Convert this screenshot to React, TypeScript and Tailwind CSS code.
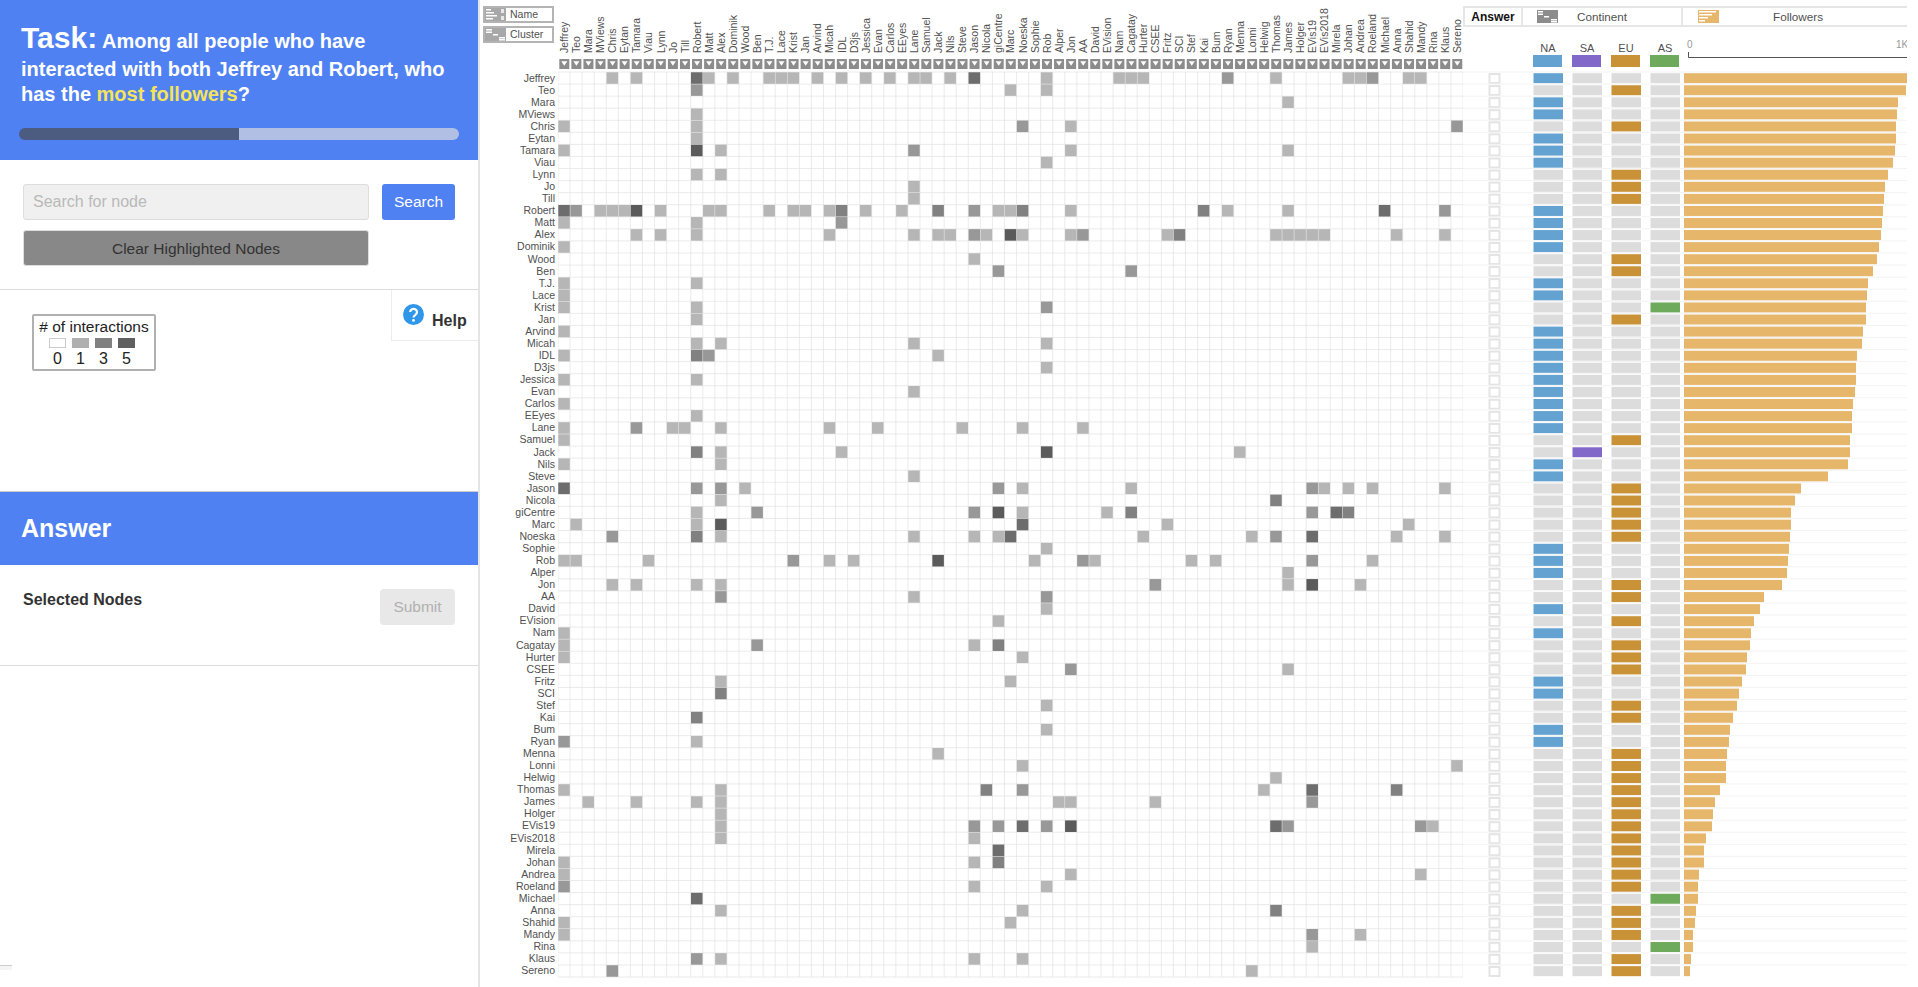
const names = "Jeffrey,Teo,Mara,MViews,Chris,Eytan,Tamara,Viau,Lynn,Jo,Till,Robert,Matt,Alex,Dominik,Wood,Ben,T.J.,Lace,Krist,Jan,Arvind,Micah,IDL,D3js,Jessica,Evan,Carlos,EEyes,Lane,Samuel,Jack,Nils,Steve,Jason,Nicola,giCentre,Marc,Noeska,Sophie,Rob,Alper,Jon,AA,David,EVision,Nam,Cagatay,Hurter,CSEE,Fritz,SCI,Stef,Kai,Bum,Ryan,Menna,Lonni,Helwig,Thomas,James,Holger,EVis19,EVis2018,Mirela,Johan,Andrea,Roeland,Michael,Anna,Shahid,Mandy,Rina,Klaus,Sereno".split(",")

// upper triangle of the matrix, "col" or "col:level" per row, mirrored below
const edges: Record<number, string> = {
    0: "4,6,11:4,12,14,17,18,19,21,23,25,27,29,30,32,34:4,40,46,47,48,55:2,59,65,66,67:2,70,71",
    1: "11:2,37,40",
    2: "60",
    3: "11",
    4: "11,38:2,42,74:2",
    5: "11",
    6: "11:5,13,29:2,42,60",
    7: "40",
    8: "11,13",
    9: "29",
    10: "29",
    11: "12,13,17,19,20,22,23:3,25,28,31:3,34:2,36,37,38:3,42,53:3,55,60,68:4,73:2",
    12: "23:2",
    13: "22,29,31,32,34:2,35,37:5,38,42,43:2,50,51:3,59,60,61,62,63,69,73",
    15: "34",
    16: "36:2,47:2",
    19: "40:2",
    22: "29,40",
    23: "31",
    24: "40",
    26: "29",
    29: "33,38,43",
    31: "40:5,56",
    34: "36:2,38,47,62:2,63,65,67,73",
    35: "59:3",
    36: "36:5,38,45,47:3,62:2,64:4,65:3",
    37: "38:4,50,70",
    38: "48,57,59:2,62:4,69,73",
    39: "40",
    40: "43:2,44,52,54,62:2,67",
    41: "60",
    42: "49:2,60,62:5,66",
    49: "60",
    57: "74",
    58: "59",
    59: "62:4,69:3",
    60: "62:2",
    62: "71:2,72",
    66: "71",
}

const continents = "NENNENNNEEENNNNEENNAE" + "NNNNNNNNN" + "ESNN" + "EEEEE" + "NNN" + "EENENEEENNEENN" + "EEEEEEEEEEEE" + "AEEEAEE"

// bar right edges, px from the start of the followers column
const followers = [224, 222, 214, 213, 212, 212, 211, 209, 204, 201, 200, 199, 198, 197, 195, 193, 189, 184, 183, 182, 182, 179, 178, 173, 172, 172, 171, 169, 168, 168, 166, 166, 164, 144, 117, 111, 107, 107, 106, 105, 104, 103, 98, 80, 76, 70, 67, 66, 63, 62, 58, 55, 53, 49, 46, 45, 43, 42, 42, 36, 31, 29, 28, 22, 20, 20, 15, 14, 14, 12, 11, 9, 9, 7, 6]

const levelColor = ["", "#b6b6b6", "#989898", "#818181", "#6d6d6d", "#5b5b5b"]
const STEP = 12.067
const TOP = 72
const contColumns = [
    { key: "N", label: "NA", x: 70.5, color: "#64a3d1" },
    { key: "S", label: "SA", x: 109.5, color: "#8269c9" },
    { key: "E", label: "EU", x: 148.5, color: "#c99237" },
    { key: "A", label: "AS", x: 187.5, color: "#6eaa5c" },
]

const cells: { r: number; c: number; l: number }[] = []
Object.entries(edges).forEach(([row, list]) => {
    list.split(",").forEach((item) => {
        const [col, level] = item.split(":")
        const r = Number(row)
        const c = Number(col)
        const l = level ? Number(level) : 1
        cells.push({ r, c, l })
        if (r !== c) cells.push({ r: c, c: r, l })
    })
})

const SortButton = ({ label, cluster }: { label: string; cluster?: boolean }) => (
    <div className="flex h-[17px] w-[71px] items-center border-2 border-[#b4b4b4] bg-white">
        <svg width="21" height="13" className="shrink-0">
            <rect width="21" height="13" fill="#a8a8a8" />
            {cluster ? (
                <>
                    <rect x="1" y="1" width="6" height="1.5" fill="#fff" />
                    <rect x="1" y="3.5" width="6" height="1.5" fill="#fff" />
                    <rect x="8" y="6" width="5" height="1.5" fill="#fff" />
                    <rect x="14" y="9" width="6" height="1.5" fill="#fff" />
                    <rect x="14" y="11" width="6" height="1.5" fill="#fff" />
                </>
            ) : (
                <>
                    <rect x="1" y="1" width="5" height="1.5" fill="#fff" />
                    <rect x="1" y="4" width="8" height="1.5" fill="#fff" />
                    <rect x="1" y="7" width="11" height="1.5" fill="#fff" />
                    <rect x="1" y="10" width="7" height="1.5" fill="#fff" />
                    <rect x="16" y="1" width="3" height="4" fill="#e8e8e8" />
                    <rect x="16" y="8" width="3" height="4" fill="#e8e8e8" />
                </>
            )}
        </svg>
        <span className="pl-[4px] text-[10.5px] leading-none text-[#505050]">{label}</span>
    </div>
)

const TabIcon = ({ color, bars }: { color: string; bars: number[][] }) => (
    <svg width="21" height="13">
        <rect width="21" height="13" fill={color} />
        {bars.map((b, i) => (
            <rect key={i} x={b[0]} y={b[1]} width={b[2]} height="1.5" fill="#fff" />
        ))}
    </svg>
)

const Matrix = () => (
    <svg width="905" height="987" className="shrink-0">
        {names.map((name, i) => (
            <text
                key={name}
                transform={`translate(${i * STEP + 10} 53) rotate(-90)`}
                fontSize="10.5"
                fill="#505050"
            >
                {name}
            </text>
        ))}
        {names.map((name, i) => (
            <g key={name} transform={`translate(${i * STEP + 1.3} 59)`}>
                <rect width="10" height="10" fill="#8c8c8c" />
                <path d="M2 2.2H8L5 6.8Z" fill="#fff" />
            </g>
        ))}
        {Array.from({ length: 76 }, (_, i) => (
            <g key={i} stroke="#e2e2e2" strokeWidth="0.7">
                <line x1={i * STEP} x2={i * STEP} y1={TOP} y2={TOP + 75 * STEP} />
                <line x1="0" x2="905" y1={TOP + i * STEP} y2={TOP + i * STEP} />
            </g>
        ))}
        {cells.map((cell) => (
            <rect
                key={`${cell.r}-${cell.c}`}
                x={cell.c * STEP + 0.25}
                y={TOP + cell.r * STEP + 0.25}
                width={STEP - 0.5}
                height={STEP - 0.5}
                fill={levelColor[cell.l]}
            />
        ))}
    </svg>
)

// y values here are page rows, the panel starts 27px down
const Attributes = () => (
    <svg width="444" height="960" className="block">
        {contColumns.map((col) => (
            <g key={col.key}>
                <text x={col.x + 14.5} y="25" textAnchor="middle" fontSize="11" fill="#505050">
                    {col.label}
                </text>
                <rect x={col.x - 0.5} y="28" width="29" height="12" fill={col.color} />
            </g>
        ))}
        <text x="224" y="21" fontSize="10" fill="#999">0</text>
        <text x="433" y="21" fontSize="10" fill="#999">1K</text>
        <path d="M225.5 25V30.5H444" fill="none" stroke="#555" strokeWidth="1" />
        {names.map((name, r) => {
            const y = 45 + r * STEP
            return (
                <g key={name}>
                    <line x1="0" x2="444" y1={y} y2={y} stroke="#f3f3f3" strokeWidth="1" />
                    <rect x="26.5" y={y + 2} width="10" height="9" fill="#fff" stroke="#e4e4e4" strokeWidth="2" />
                    {contColumns.map((col) => (
                        <rect
                            key={col.key}
                            x={col.x}
                            y={y + 1.2}
                            width="29.5"
                            height="10"
                            fill={continents[r] === col.key ? col.color : "#dcdcdc"}
                        />
                    ))}
                    <rect x="221" y={y + 1.2} width={followers[r]} height="10" fill="#e6b66a" />
                </g>
            )
        })}
    </svg>
)

export default function App() {
    return (
        <div className="flex h-[987px] w-[1918px] overflow-hidden bg-white font-['Liberation_Sans',sans-serif] text-[#333]">
            <aside className="flex w-[480px] shrink-0 flex-col border-r-2 border-[#e4e4e4]">
                <div className="flex h-[160px] flex-col bg-[#4f81f2] px-[21px] pt-[19px]">
                    <p className="text-[20px] leading-[1.25] font-bold text-white">
                        <span className="text-[30px]">Task:</span> Among all people who have interacted with both Jeffrey and Robert, who has the <span className="text-[#f5e35c]">most followers</span>?
                    </p>
                    <div className="mt-auto mb-[20px] -ml-[2px] flex h-[12px] w-[440px] overflow-hidden rounded-full">
                        <div className="w-[220px] bg-[#4c5b80]" />
                        <div className="flex-1 bg-[#b0bfe3]" />
                    </div>
                </div>
                <div className="h-[130px] border-b border-[#dddddd] pt-[24px] pl-[23px] text-[15.5px]">
                    <div className="flex gap-[13px]">
                        <input
                            placeholder="Search for node"
                            readOnly
                            className="h-[36px] w-[346px] rounded-[3px] border border-[#dddddd] bg-[#f0f0f0] px-[9px] text-[16px] placeholder:text-[#b9b9b9]"
                        />
                        <button className="h-[36px] w-[73px] rounded-[3px] bg-[#4f81f2] text-white">Search</button>
                    </div>
                    <button className="mt-[10px] h-[36px] w-[346px] rounded-[3px] border border-[#dddddd] bg-[#888888] pt-[1px] text-[#333]">
                        Clear Highlighted Nodes
                    </button>
                </div>
                <div className="relative h-[201px] pt-[24px] pl-[32px]">
                    <div className="h-[57px] w-[124px] rounded-[2px] border-2 border-[#b0b0b0] pt-[2px] text-[#222]">
                        <div className="text-center text-[15.5px] leading-[17px]">
                            # of interactions
                        </div>
                        <div className="mt-[3px] flex justify-center gap-[6px] pr-[4px]">
                            <div className="h-[10px] w-[17px] border border-[#cccccc] bg-white" />
                            <div className="h-[10px] w-[17px] bg-[#b0b0b0]" />
                            <div className="h-[10px] w-[17px] bg-[#808080]" />
                            <div className="h-[10px] w-[17px] bg-[#606060]" />
                        </div>
                        <div className="mt-[2px] flex justify-center pr-[4px] text-center text-[16px] leading-[17px]">
                            <span className="w-[23px]">0</span>
                            <span className="w-[23px]">1</span>
                            <span className="w-[23px]">3</span>
                            <span className="w-[23px]">5</span>
                        </div>
                    </div>
                    <div className="absolute top-0 right-0 flex h-[51px] w-[87px] border-b border-l border-[#ececec] pt-[14px] pl-[11px]">
                        <svg width="21" height="21" viewBox="0 0 21 21">
                            <circle cx="10.5" cy="10.5" r="10.5" fill="#2f96ea" />
                            <path d="M7.2 8a3.4 3.2 0 1 1 5.2 2.8c-1.2.8-1.9 1.3-1.9 2.7" fill="none" stroke="#fff" strokeWidth="2.2" />
                            <circle cx="10.5" cy="16.4" r="1.4" fill="#fff" />
                        </svg>
                        <span className="pt-[8px] pl-[8px] text-[16px] leading-[18px] font-bold">Help</span>
                    </div>
                </div>
                <div className="flex h-[74px] items-center border-t border-[#cccccc] bg-[#4f81f2] pl-[21px] text-[25px] font-bold text-white">
                    Answer
                </div>
                <div className="flex h-[101px] items-start justify-between border-b border-[#dddddd] pt-[24px] pr-[23px] pl-[23px]">
                    <span className="pt-[1px] text-[16px] leading-[20px] font-bold">Selected Nodes</span>
                    <button className="h-[36px] w-[75px] rounded-[4px] bg-[#e8e8e8] text-[15.5px] text-[#b0b0b0]">Submit</button>
                </div>
                <div className="mt-auto mb-[17px] h-[5px] w-[12px] border-t border-[#cccccc] bg-[#f5f5f5]" />
            </aside>
            <main className="flex min-w-0 flex-1">
                <div className="w-[78px] shrink-0">
                    <div className="flex h-[71.6px] flex-col gap-[3px] pt-[6px] pl-[3px]">
                        <SortButton label="Name" />
                        <SortButton label="Cluster" cluster />
                    </div>
                    {names.map((name) => (
                        <div key={name} className="h-[12.067px] pr-[3px] text-right text-[10.5px] leading-[12.067px] text-[#505050]">
                            {name}
                        </div>
                    ))}
                </div>
                <Matrix />
                <div className="w-[444px] shrink-0">
                    <div className="mt-[6px] flex h-[21px] border-y-2 border-[#e6e6e6] text-[11.7px] text-[#505050]">
                        <div className="flex w-[60px] items-center justify-center border-x-2 border-[#e6e6e6] text-[12px] font-bold text-[#111]">
                            Answer
                        </div>
                        <div className="flex w-[160px] items-center border-r-2 border-[#e6e6e6] pl-[14px]">
                            <TabIcon color="#8c8c8c" bars={[[1, 1, 5], [1, 3.5, 5], [7, 6, 5], [14, 9, 6], [14, 11, 6]]} />
                            <span className="pl-[19px]">Continent</span>
                        </div>
                        <div className="flex flex-1 items-center pl-[15px]">
                            <TabIcon color="#e6b66a" bars={[[1, 1, 17], [1, 4, 13], [1, 7, 9], [1, 10, 6]]} />
                            <span className="pl-[54px]">Followers</span>
                        </div>
                    </div>
                    <Attributes />
                </div>
            </main>
        </div>
    )
}
